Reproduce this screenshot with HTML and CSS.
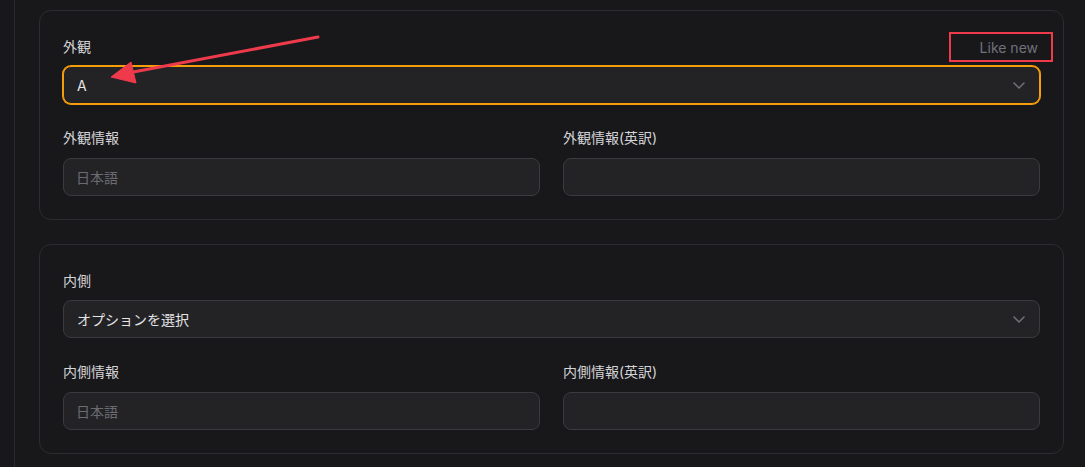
FILE: index.html
```html
<!DOCTYPE html>
<html lang="ja">
<head>
<meta charset="utf-8">
<title>Form</title>
<link rel="stylesheet" href="styles.css">
</head>
<body>
<div class="page">
  <section class="card">
    <div class="label-row">
      <span class="label">外観</span>
      <span class="condition">Like new</span>
    </div>
    <div class="select focused">
      <span class="value">A</span>
      <svg class="chev" width="16" height="16" viewBox="0 0 16 16"><path d="M3 6l5 5 5-5" fill="none" stroke="#71717a" stroke-width="1.5" stroke-linecap="round" stroke-linejoin="round"/></svg>
    </div>
    <div class="grid">
      <div class="field">
        <div class="label small">外観情報</div>
        <div class="input"><span class="ph">日本語</span></div>
      </div>
      <div class="field">
        <div class="label small">外観情報(英訳)</div>
        <div class="input"></div>
      </div>
    </div>
  </section>

  <section class="card">
    <div class="label-row">
      <span class="label">内側</span>
    </div>
    <div class="select">
      <span class="value">オプションを選択</span>
      <svg class="chev" width="16" height="16" viewBox="0 0 16 16"><path d="M3 6l5 5 5-5" fill="none" stroke="#71717a" stroke-width="1.5" stroke-linecap="round" stroke-linejoin="round"/></svg>
    </div>
    <div class="grid">
      <div class="field">
        <div class="label small">内側情報</div>
        <div class="input"><span class="ph">日本語</span></div>
      </div>
      <div class="field">
        <div class="label small">内側情報(英訳)</div>
        <div class="input"></div>
      </div>
    </div>
  </section>
</div>

<div class="annot-box"></div>
<svg class="annot-arrow" width="1085" height="467" viewBox="0 0 1085 467">
  <line x1="318" y1="37" x2="128" y2="73" stroke="#ef3a4b" stroke-width="3" stroke-linecap="round"/>
  <polygon points="111,77 131,62 136,83" fill="#ef3a4b" stroke="#ef3a4b" stroke-width="1" stroke-linejoin="round"/>
</svg>
</body>
</html>
```

FILE: styles.css
```css
html, body {
  margin: 0;
  padding: 0;
  background: #18181b;
}
body {
  font-family: "Inter", "Noto Sans CJK JP", "Noto Sans", sans-serif;
  font-size: 14px;
  color: #d4d4d8;
  width: 1085px;
  height: 467px;
  overflow: hidden;
  position: relative;
}
.page {
  margin-left: 14px;
  border-left: 1px solid #2a2a2e;
  padding: 10px 21px 0 24px;
  display: flex;
  flex-direction: column;
  gap: 24px;
  min-height: 467px;
  box-sizing: border-box;
}
.card {
  border: 1px solid #2c2c30;
  border-radius: 12px;
  padding: 24px 23px 23px 23px;
  display: flex;
  flex-direction: column;
}
.label-row {
  display: flex;
  justify-content: space-between;
  align-items: center;
  height: 24px;
  margin-bottom: 7px;
}
.label {
  color: #d4d4d8;
  line-height: 20px;
}
.condition {
  color: #71717a;
  padding-right: 2px;
}
.select {
  height: 38px;
  box-sizing: border-box;
  border: 1px solid #3a3a3f;
  border-radius: 8px;
  background: #232326;
  display: flex;
  align-items: center;
  justify-content: space-between;
  padding: 0 12px 0 13px;
  color: #e4e4e7;
}
.select.focused {
  border-color: #f59e0b;
  box-shadow: 0 0 0 1px #f59e0b;
}
.chev { display: block; }
.grid {
  display: grid;
  grid-template-columns: 1fr 1fr;
  column-gap: 23px;
  margin-top: 24px;
}
.field { display: flex; flex-direction: column; }
.label.small { margin-bottom: 10px; }
.input {
  height: 38px;
  box-sizing: border-box;
  border: 1px solid #3a3a3f;
  border-radius: 8px;
  background: #232326;
  display: flex;
  align-items: center;
  padding: 0 12px;
}
.ph { color: #6b6b73; }
.annot-box {
  position: absolute;
  left: 949px;
  top: 32px;
  width: 100px;
  height: 26px;
  border: 2px solid #ef3a4b;
}
.annot-arrow {
  position: absolute;
  left: 0;
  top: 0;
  pointer-events: none;
}
```
